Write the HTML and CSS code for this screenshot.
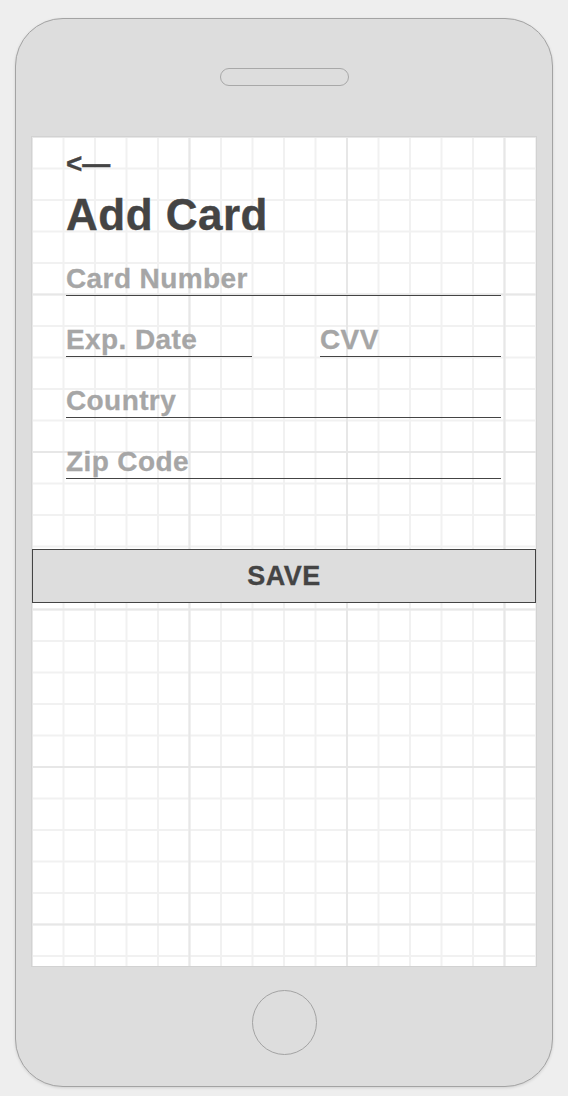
FILE: index.html
```html
<!DOCTYPE html>
<html lang="en">
<head>
<meta charset="utf-8">
<title>Add Card</title>
<link rel="stylesheet" href="styles.css">
</head>
<body>
<div class="phone">
  <div class="speaker"></div>
  <div class="screen">
    <div class="content">
      <div class="back">&lt;—</div>
      <h1 class="title">Add Card</h1>
      <div class="form">
        <div class="field">Card Number</div>
        <div class="row">
          <div class="field exp">Exp. Date</div>
          <div class="field cvv">CVV</div>
        </div>
        <div class="field">Country</div>
        <div class="field">Zip Code</div>
      </div>
    </div>
    <button class="save" type="button">SAVE</button>
  </div>
  <div class="home"></div>
</div>
</body>
</html>
```

FILE: styles.css
```css
html, body {
  margin: 0;
  padding: 0;
  background: #eeeeee;
}

body {
  font-family: "Liberation Sans", Arial, Helvetica, sans-serif;
  width: 568px;
  height: 1096px;
  overflow: hidden;
}

.phone {
  box-sizing: border-box;
  width: 538px;
  height: 1069px;
  margin: 18px 0 0 15px;
  background: #dddddd;
  border: 1px solid #a3a3a3;
  border-radius: 48px;
  box-shadow: 0 1px 3px rgba(0, 0, 0, 0.12);
  display: flex;
  flex-direction: column;
  align-items: center;
}

.speaker {
  box-sizing: border-box;
  width: 129px;
  height: 18px;
  margin-top: 49px;
  border: 1px solid #a8a8a8;
  border-radius: 9px;
}

.screen {
  box-sizing: border-box;
  width: 504px;
  height: 829px;
  margin-top: 51px;
  background-color: #ffffff;
  background-image:
    linear-gradient(to right, #e7e7e7 2px, transparent 2px),
    linear-gradient(to bottom, #e7e7e7 2px, transparent 2px),
    linear-gradient(to right, #f1f1f1 2px, transparent 2px),
    linear-gradient(to bottom, #f1f1f1 2px, transparent 2px);
  background-size:
    157.5px 100%,
    100% 157.5px,
    31.5px 100%,
    100% 31.5px;
  background-position: -1px -1px;
  box-shadow: 0 0 0 1px #d2d2d2;
  padding-top: 13px;
}

.content {
  padding: 0 35px 0 34px;
}

.back {
  font-size: 28px;
  font-weight: bold;
  line-height: 28px;
  color: #444444;
  -webkit-text-stroke: 0.3px #444444;
}

.title {
  margin: 13px 0 0;
  font-size: 44px;
  font-weight: bold;
  line-height: 48px;
  letter-spacing: 0.5px;
  color: #444444;
  -webkit-text-stroke: 0.4px #444444;
}

.form {
  margin-top: 24px;
  display: flex;
  flex-direction: column;
  gap: 28px;
}

.row {
  display: flex;
  justify-content: space-between;
}

.field {
  font-size: 28px;
  font-weight: bold;
  line-height: 32px;
  letter-spacing: 0.4px;
  color: #a6a6a6;
  -webkit-text-stroke: 0.3px #a6a6a6;
  border-bottom: 1px solid #444444;
}

.exp {
  width: 186px;
}

.cvv {
  width: 181px;
}

.save {
  display: flex;
  align-items: center;
  justify-content: center;
  box-sizing: border-box;
  width: 504px;
  height: 54px;
  margin-top: 70px;
  padding: 0;
  background: #dddddd;
  border: 1px solid #444444;
  font-family: "Liberation Sans", Arial, Helvetica, sans-serif;
  font-size: 27px;
  font-weight: bold;
  letter-spacing: 0.5px;
  color: #444444;
  -webkit-text-stroke: 0.3px #444444;
}

.home {
  box-sizing: border-box;
  width: 65px;
  height: 65px;
  margin-top: 24px;
  border: 1px solid #a3a3a3;
  border-radius: 50%;
}
```
